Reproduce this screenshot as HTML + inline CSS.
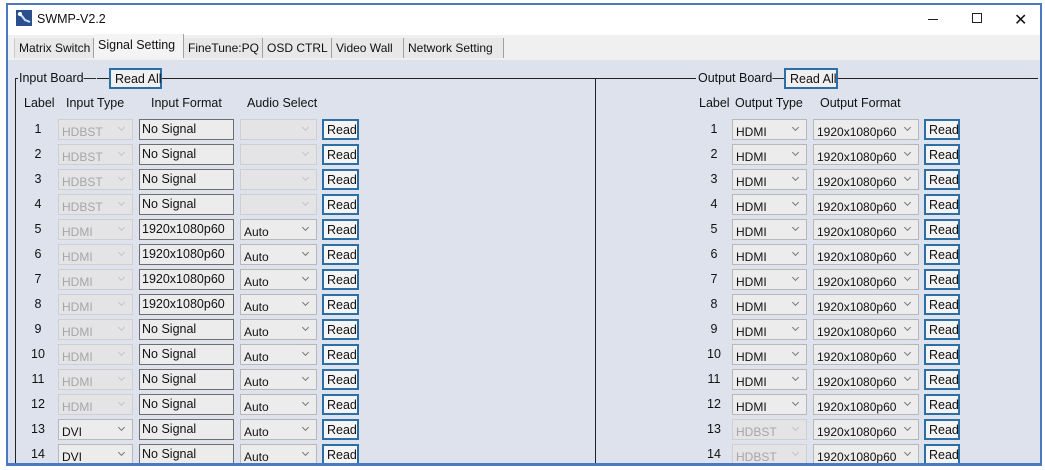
<!DOCTYPE html>
<html><head><meta charset="utf-8"><style>
*{box-sizing:border-box;margin:0;padding:0;white-space:nowrap}
body{width:1045px;height:470px;background:#fff;font-family:"Liberation Sans","DejaVu Sans",sans-serif;font-size:12.5px;color:#111;position:relative;overflow:hidden}
.win{position:absolute;left:6px;top:3px;width:1036px;height:463px;border:2px solid #4a78c2;border-bottom-width:3px;background:#dde2ec}
.tb{position:absolute;left:0;top:0;width:100%;height:30px;background:#fff}
.ts{position:absolute;left:0;top:30px;width:100%;height:25px;background:#f0f0f0}
.a{position:absolute}
.tab{position:absolute;top:38px;height:20px;background:#e8e8e8;border-right:1px solid #a0a0a0;padding:3px 0 0 4px;font-size:12px}
.line{position:absolute;background:#222}
.c{position:absolute;height:21px;border:1px solid #b8b8b8;background:#ececec;padding:5px 0 0 4px;font-size:12.5px;overflow:hidden}
.c.d{color:#a6a6a6;background:#e4e4e6;border-color:#cfcfcf}
.c::after{content:"";position:absolute;right:8px;top:5px;width:4px;height:4px;border-right:1px solid #777;border-bottom:1px solid #777;transform:rotate(45deg)}
.c.d::after{border-color:#c4c4c4}
.f{position:absolute;height:21px;border:1px solid #6e6e6e;background:#ececec;padding:2px 0 0 2px}
.b{position:absolute;height:21px;border:2px solid #2c6ea6;background:#f4f4f4;padding:2px 0 0 3px}
.l{position:absolute;width:24px;text-align:center}
.r{position:absolute;left:0}
.r .l{top:3px}
.w .c{font-size:12px;padding-left:3px}
</style></head><body>
<div class="win">
<div class="tb"></div><div class="ts"></div>
</div>
<svg class="a" style="left:16px;top:10px" width="16" height="16"><rect width="16" height="16" fill="#2b4f8c"/><path d="M2 4l4 2 3 4 5 2" stroke="#cfe3ff" stroke-width="2" fill="none"/><circle cx="4" cy="4" r="2" fill="#fff"/></svg>
<div class="a" style="left:37px;top:12px;font-size:12.5px">SWMP-V2.2</div>
<div class="a" style="left:928px;top:19px;width:10px;height:1px;background:#222"></div>
<div class="a" style="left:972px;top:13px;width:10px;height:10px;border:1px solid #222"></div>
<div class="a" style="left:1014px;top:10px;font-size:16px">✕</div>
<div class="tab" style="left:14px;width:80px;border-left:1px solid #ccc">Matrix Switch</div>
<div class="tab" style="left:94px;top:34px;height:24px;width:90px;background:#f4f4f4;font-size:12.5px;padding-top:4px">Signal Setting</div>
<div class="tab" style="left:184px;width:79px">FineTune:PQ</div>
<div class="tab" style="left:263px;width:69px">OSD CTRL</div>
<div class="tab" style="left:332px;width:72px">Video Wall</div>
<div class="tab" style="left:404px;width:100px">Network Setting</div>

<div class="line" style="left:15px;top:78px;width:1023px;height:1px"></div>
<div class="line" style="left:15px;top:78px;width:1px;height:386px"></div>
<div class="line" style="left:595px;top:78px;width:1px;height:386px"></div>
<div class="a" style="left:18px;top:71px;background:#dde2ec;padding:0 1px">Input Board—</div>
<div class="b" style="left:109px;top:68px;width:53px;background:#f0f0f0;padding-left:4px">Read All</div>
<div class="a" style="left:696px;top:71px;background:#dde2ec;padding:0 1px 0 2px">Output Board—</div>
<div class="b" style="left:784px;top:68px;width:54px;background:#f0f0f0;padding-left:4px">Read All</div>

<div class="a" style="left:24px;top:96px">Label</div>
<div class="a" style="left:66px;top:96px">Input Type</div>
<div class="a" style="left:151px;top:96px">Input Format</div>
<div class="a" style="left:247px;top:96px">Audio Select</div>
<div class="a" style="left:699px;top:96px">Label</div>
<div class="a" style="left:735px;top:96px">Output Type</div>
<div class="a" style="left:820px;top:96px">Output Format</div>

<div class="r w" style="top:119px">
<div class="l" style="left:26px">1</div><div class="c d" style="left:58px;width:75px">HDBST</div><div class="f" style="left:139px;width:95px">No Signal</div><div class="c d" style="left:240px;width:77px"></div><div class="b" style="left:322px;width:37px">Read</div>
<div class="l" style="left:702px">1</div><div class="c" style="left:732px;width:75px">HDMI</div><div class="c" style="left:813px;width:106px">1920x1080p60</div><div class="b" style="left:924px;width:36px">Read</div>
</div>
<div class="r w" style="top:144px">
<div class="l" style="left:26px">2</div><div class="c d" style="left:58px;width:75px">HDBST</div><div class="f" style="left:139px;width:95px">No Signal</div><div class="c d" style="left:240px;width:77px"></div><div class="b" style="left:322px;width:37px">Read</div>
<div class="l" style="left:702px">2</div><div class="c" style="left:732px;width:75px">HDMI</div><div class="c" style="left:813px;width:106px">1920x1080p60</div><div class="b" style="left:924px;width:36px">Read</div>
</div>
<div class="r w" style="top:169px">
<div class="l" style="left:26px">3</div><div class="c d" style="left:58px;width:75px">HDBST</div><div class="f" style="left:139px;width:95px">No Signal</div><div class="c d" style="left:240px;width:77px"></div><div class="b" style="left:322px;width:37px">Read</div>
<div class="l" style="left:702px">3</div><div class="c" style="left:732px;width:75px">HDMI</div><div class="c" style="left:813px;width:106px">1920x1080p60</div><div class="b" style="left:924px;width:36px">Read</div>
</div>
<div class="r w" style="top:194px">
<div class="l" style="left:26px">4</div><div class="c d" style="left:58px;width:75px">HDBST</div><div class="f" style="left:139px;width:95px">No Signal</div><div class="c d" style="left:240px;width:77px"></div><div class="b" style="left:322px;width:37px">Read</div>
<div class="l" style="left:702px">4</div><div class="c" style="left:732px;width:75px">HDMI</div><div class="c" style="left:813px;width:106px">1920x1080p60</div><div class="b" style="left:924px;width:36px">Read</div>
</div>
<div class="r w" style="top:219px">
<div class="l" style="left:26px">5</div><div class="c d" style="left:58px;width:75px">HDMI</div><div class="f" style="left:139px;width:95px">1920x1080p60</div><div class="c" style="left:240px;width:77px">Auto</div><div class="b" style="left:322px;width:37px">Read</div>
<div class="l" style="left:702px">5</div><div class="c" style="left:732px;width:75px">HDMI</div><div class="c" style="left:813px;width:106px">1920x1080p60</div><div class="b" style="left:924px;width:36px">Read</div>
</div>
<div class="r w" style="top:244px">
<div class="l" style="left:26px">6</div><div class="c d" style="left:58px;width:75px">HDMI</div><div class="f" style="left:139px;width:95px">1920x1080p60</div><div class="c" style="left:240px;width:77px">Auto</div><div class="b" style="left:322px;width:37px">Read</div>
<div class="l" style="left:702px">6</div><div class="c" style="left:732px;width:75px">HDMI</div><div class="c" style="left:813px;width:106px">1920x1080p60</div><div class="b" style="left:924px;width:36px">Read</div>
</div>
<div class="r w" style="top:269px">
<div class="l" style="left:26px">7</div><div class="c d" style="left:58px;width:75px">HDMI</div><div class="f" style="left:139px;width:95px">1920x1080p60</div><div class="c" style="left:240px;width:77px">Auto</div><div class="b" style="left:322px;width:37px">Read</div>
<div class="l" style="left:702px">7</div><div class="c" style="left:732px;width:75px">HDMI</div><div class="c" style="left:813px;width:106px">1920x1080p60</div><div class="b" style="left:924px;width:36px">Read</div>
</div>
<div class="r w" style="top:294px">
<div class="l" style="left:26px">8</div><div class="c d" style="left:58px;width:75px">HDMI</div><div class="f" style="left:139px;width:95px">1920x1080p60</div><div class="c" style="left:240px;width:77px">Auto</div><div class="b" style="left:322px;width:37px">Read</div>
<div class="l" style="left:702px">8</div><div class="c" style="left:732px;width:75px">HDMI</div><div class="c" style="left:813px;width:106px">1920x1080p60</div><div class="b" style="left:924px;width:36px">Read</div>
</div>
<div class="r w" style="top:319px">
<div class="l" style="left:26px">9</div><div class="c d" style="left:58px;width:75px">HDMI</div><div class="f" style="left:139px;width:95px">No Signal</div><div class="c" style="left:240px;width:77px">Auto</div><div class="b" style="left:322px;width:37px">Read</div>
<div class="l" style="left:702px">9</div><div class="c" style="left:732px;width:75px">HDMI</div><div class="c" style="left:813px;width:106px">1920x1080p60</div><div class="b" style="left:924px;width:36px">Read</div>
</div>
<div class="r w" style="top:344px">
<div class="l" style="left:26px">10</div><div class="c d" style="left:58px;width:75px">HDMI</div><div class="f" style="left:139px;width:95px">No Signal</div><div class="c" style="left:240px;width:77px">Auto</div><div class="b" style="left:322px;width:37px">Read</div>
<div class="l" style="left:702px">10</div><div class="c" style="left:732px;width:75px">HDMI</div><div class="c" style="left:813px;width:106px">1920x1080p60</div><div class="b" style="left:924px;width:36px">Read</div>
</div>
<div class="r w" style="top:369px">
<div class="l" style="left:26px">11</div><div class="c d" style="left:58px;width:75px">HDMI</div><div class="f" style="left:139px;width:95px">No Signal</div><div class="c" style="left:240px;width:77px">Auto</div><div class="b" style="left:322px;width:37px">Read</div>
<div class="l" style="left:702px">11</div><div class="c" style="left:732px;width:75px">HDMI</div><div class="c" style="left:813px;width:106px">1920x1080p60</div><div class="b" style="left:924px;width:36px">Read</div>
</div>
<div class="r w" style="top:394px">
<div class="l" style="left:26px">12</div><div class="c d" style="left:58px;width:75px">HDMI</div><div class="f" style="left:139px;width:95px">No Signal</div><div class="c" style="left:240px;width:77px">Auto</div><div class="b" style="left:322px;width:37px">Read</div>
<div class="l" style="left:702px">12</div><div class="c" style="left:732px;width:75px">HDMI</div><div class="c" style="left:813px;width:106px">1920x1080p60</div><div class="b" style="left:924px;width:36px">Read</div>
</div>
<div class="r w" style="top:419px">
<div class="l" style="left:26px">13</div><div class="c" style="left:58px;width:75px">DVI</div><div class="f" style="left:139px;width:95px">No Signal</div><div class="c" style="left:240px;width:77px">Auto</div><div class="b" style="left:322px;width:37px">Read</div>
<div class="l" style="left:702px">13</div><div class="c d" style="left:732px;width:75px">HDBST</div><div class="c" style="left:813px;width:106px">1920x1080p60</div><div class="b" style="left:924px;width:36px">Read</div>
</div>
<div class="r w" style="top:444px">
<div class="l" style="left:26px">14</div><div class="c" style="left:58px;width:75px">DVI</div><div class="f" style="left:139px;width:95px">No Signal</div><div class="c" style="left:240px;width:77px">Auto</div><div class="b" style="left:322px;width:37px">Read</div>
<div class="l" style="left:702px">14</div><div class="c d" style="left:732px;width:75px">HDBST</div><div class="c" style="left:813px;width:106px">1920x1080p60</div><div class="b" style="left:924px;width:36px">Read</div>
</div>
<div class="a" style="left:6px;top:463px;width:1036px;height:3px;background:#4a78c2"></div>
<div class="a" style="left:0;top:466px;width:1045px;height:4px;background:#fff"></div>
</body></html>
